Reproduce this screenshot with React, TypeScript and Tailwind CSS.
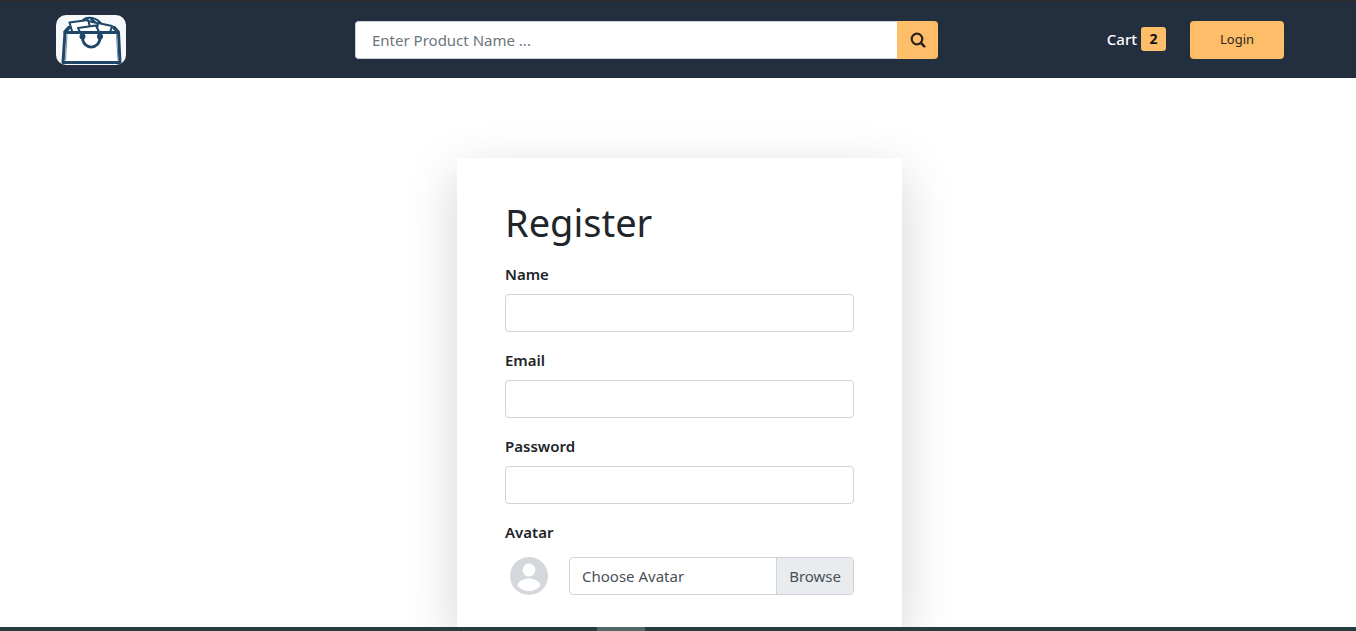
function Logo() {
  return (
    <svg viewBox="0 0 70 50" className="h-[50px] w-[70px] rounded-[10px] bg-[#f6f8fa]" aria-hidden="true">
      <g fill="none" stroke="#1f4567" strokeWidth="2" strokeLinejoin="round" strokeLinecap="round">
        <path d="M27 5C31 1.500 41 1.500 46 10M32 6L41 8M35 4L43 10" />
        <path d="M16 16L13.500 7.500L32 5L34 12" fill="#fff" />
        <path d="M41 14L42 8L56 11L54.500 16" fill="#fff" />
        <path d="M24 17L22 13L40 10.500L43 17" fill="#fff" />
        <path d="M9 17L13 12.500M62 17L58 12.500" strokeWidth="3.500" />
        <path d="M9 17.500H62.500L64 47.500H7Z" fill="#fff" strokeWidth="3" />
        <path d="M11 20L9.500 45M60.500 20L62 45" stroke="#6d89a2" strokeWidth="1" />
        <path d="M26.500 22C26.500 35.500 44 35.500 44 22" strokeWidth="2.800" />
      </g>
      <circle cx="26.500" cy="21.500" r="3" fill="#1f4567" />
      <circle cx="44" cy="21.500" r="3" fill="#1f4567" />
    </svg>
  );
}

function SearchIcon() {
  return (
    <svg viewBox="0 0 16 16" className="size-4" fill="none" stroke="currentColor" aria-hidden="true">
      <circle cx="7" cy="7" r="5.300" strokeWidth="2.200" />
      <path d="M11 11L14.300 14.300" strokeWidth="2.600" strokeLinecap="round" />
    </svg>
  );
}

function Avatar() {
  return (
    <svg viewBox="0 0 38 38" className="mx-[5px] size-[38px] shrink-0" role="img" aria-label="Avatar preview">
      <circle cx="19" cy="19" r="19" fill="#d4d7dc" />
      <circle cx="19" cy="13" r="6.500" fill="#fff" />
      <path d="M7.500 28.500C9 23.500 14 21.500 19 21.500S29 23.500 30.500 28.500C27.500 32.500 23.500 34 19 34S10.500 32.500 7.500 28.500Z" fill="#fff" />
    </svg>
  );
}

function Field({ id, label, type }: { id: string; label: string; type: string }) {
  return (
    <div className="mb-4">
      <label htmlFor={id} className="mb-2 block text-[15px] leading-6 font-semibold">
        {label}
      </label>
      <input
        id={id}
        type={type}
        className="block h-[38px] w-full rounded-[4px] border border-[#ced4da] bg-white px-3 outline-none focus:border-[#80bdff]"
      />
    </div>
  );
}

export default function App() {
  return (
    <div className="flex h-screen flex-col bg-white font-['Noto_Sans','Open_Sans',sans-serif] text-[15px] text-[#212529]">
      <header className="grid shrink-0 grid-cols-[299fr_583fr_346fr] items-center border-t-2 border-[#2a2c30] bg-[#232f3e] pt-[13px] pr-[72px] pb-[13px] pl-14">
        <a href="#home" aria-label="Home" className="justify-self-start">
          <Logo />
        </a>
        <form role="search" className="flex h-[38px]">
          <input
            type="text"
            aria-label="Search products"
            placeholder="Enter Product Name ..."
            className="min-w-0 flex-1 rounded-l-[4px] border border-r-0 border-[#ced4da] bg-white px-4 outline-none placeholder:text-[#6c757d]"
          />
          <button
            type="button"
            aria-label="Search"
            className="flex w-[41px] items-center justify-center rounded-r-[4px] bg-[#febd69] text-[#2a2419]"
          >
            <SearchIcon />
          </button>
        </form>
        <div className="flex items-center justify-end gap-6">
          <a href="#cart" className="mb-[2px] flex items-center gap-1 font-medium text-white">
            Cart
            <span className="flex h-6 w-[25px] items-center justify-center rounded-[3px] bg-[#febd69] text-sm font-bold text-[#111]">
              2
            </span>
          </a>
          <button type="button" className="h-[38px] w-[94px] rounded-[4px] bg-[#febd69] text-[13px] text-[#2b2620]">
            Login
          </button>
        </div>
      </header>

      <main className="min-h-0 flex-1 overflow-hidden pt-20 pl-[3px]">
        <form className="mx-auto h-full max-w-[445px] bg-white px-12 pt-10 shadow-[0_16px_48px_rgba(0,0,0,0.175)]">
          <h1 className="mb-4 text-[38px] leading-[48px] font-normal">Register</h1>
          <Field id="name" label="Name" type="text" />
          <Field id="email" label="Email" type="email" />
          <Field id="password" label="Password" type="password" />
          <label htmlFor="avatar" className="mb-[13px] block text-[15px] leading-6 font-semibold">
            Avatar
          </label>
          <div className="flex items-center gap-4">
            <Avatar />
            <label
              htmlFor="avatar"
              className="flex h-[38px] flex-1 cursor-pointer items-stretch overflow-hidden rounded-[4px] border border-[#ced4da] text-[#495057]"
            >
              <input id="avatar" type="file" className="sr-only" />
              <span className="flex flex-1 items-center px-3">Choose Avatar</span>
              <span className="flex items-center border-l border-[#ced4da] bg-[#e9ecef] px-3">Browse</span>
            </label>
          </div>
        </form>
      </main>

      <footer className="flex h-1 shrink-0 bg-[#243d3d]">
        <div className="ml-[44%] w-12 bg-[#526766]" />
      </footer>
    </div>
  );
}
